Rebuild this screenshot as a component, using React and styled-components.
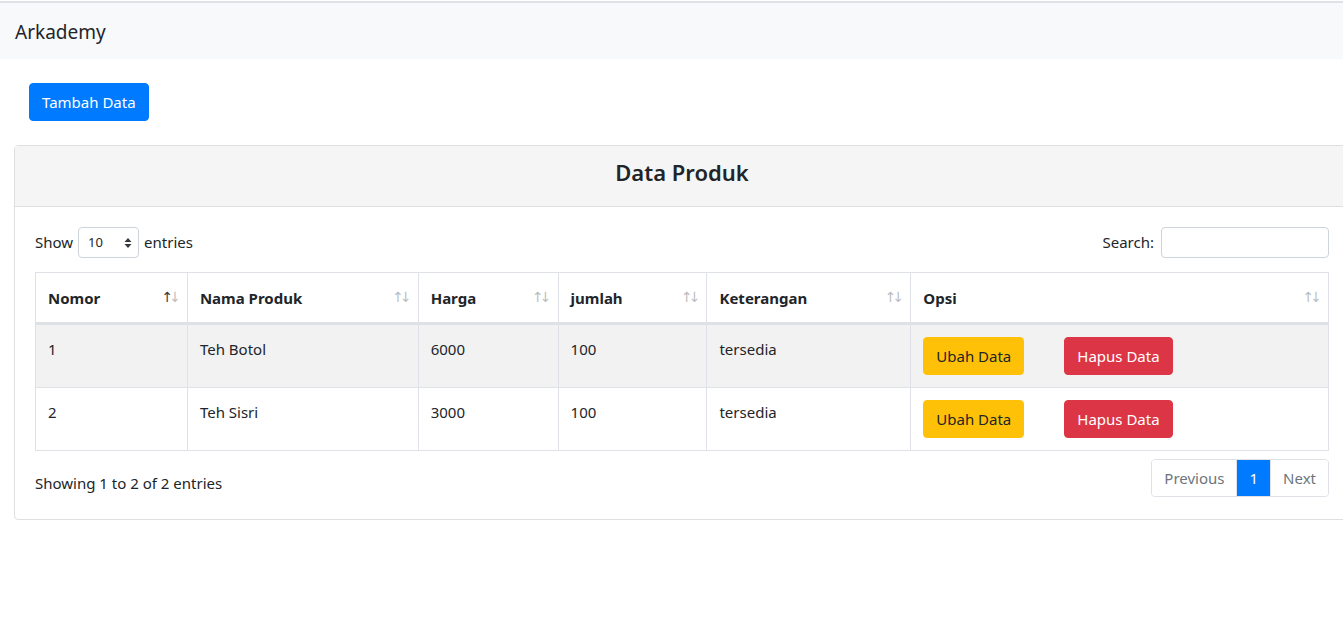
import React from "react";
import styled, { createGlobalStyle } from "styled-components";

const Global = createGlobalStyle`
  html, body { margin: 0; padding: 0; background: #fff; overflow: hidden; }
  body { font-family: "Noto Sans", "Open Sans", sans-serif; color: #212529; font-size: 16px; line-height: 1.5; }
  * { box-sizing: border-box; }
`;

const Page = styled.div`
  width: 1343px;
  padding-top: 1px;
`;

const Navbar = styled.nav`
  background: #f8f9fa;
  border-top: 2px solid #dee2e6;
  height: 58px;
  display: flex;
  align-items: center;
  padding: 2px 15px 0;
`;

const Brand = styled.span`
  font-size: 19px;
  color: #212529;
`;

const Main = styled.div`
  padding: 24px 0 0 14px;
  width: 1350px;
`;

const Btn = styled.button`
  font-family: inherit;
  font-size: 15px;
  line-height: 24px;
  padding: 6px 12px;
  border-radius: 4px;
  border: 1px solid ${(p) => p.$bg};
  background: ${(p) => p.$bg};
  color: ${(p) => p.$fg};
  cursor: pointer;
`;

const TopBtn = styled(Btn)`
  margin-left: 15px;
  margin-bottom: 24px;
`;

const Card = styled.div`
  border: 1px solid #dfdfdf;
  border-radius: 4px;
  width: 1336px;
`;

const CardHeader = styled.div`
  background: #f5f5f5;
  border-bottom: 1px solid #dfdfdf;
  height: 61px;
  display: flex;
  align-items: center;
  justify-content: center;
  padding-bottom: 8px;
`;

const Title = styled.h3`
  margin: 0;
  font-size: 22px;
  font-weight: 600;
`;

const CardBody = styled.div`
  padding: 20px 20px 22px;
`;

const Controls = styled.div`
  display: flex;
  justify-content: space-between;
  align-items: center;
  height: 31px;
  margin-bottom: 14px;
`;

const Label = styled.label`
  display: flex;
  align-items: center;
  gap: 5px;
  font-size: 15px;
`;

const SelectBox = styled.div`
  width: 61px;
  height: 31px;
  border: 1px solid #ced4da;
  border-radius: 4px;
  display: flex;
  align-items: center;
  justify-content: space-between;
  padding: 0 6px 0 9px;
  font-size: 13px;
`;

const Input = styled.input`
  width: 168px;
  height: 31px;
  border: 1px solid #ced4da;
  border-radius: 4px;
  margin-left: 2px;
`;

const Table = styled.table`
  width: 100%;
  border-collapse: collapse;
  border: 1px solid #dee2e6;
`;

const Th = styled.th`
  border: 1px solid #dee2e6;
  border-bottom: 3px solid #dee2e6;
  padding: 12px 12px 11px;
  text-align: left;
  font-size: 15px;
  font-weight: 700;
  width: ${(p) => p.$w}px;
`;

const ThInner = styled.div`
  display: flex;
  justify-content: space-between;
  align-items: center;
  line-height: 26px;
`;

const Arrows = styled.span`
  font-family: "DejaVu Sans", sans-serif;
  font-size: 14px;
  font-weight: 400;
  letter-spacing: -4px;
  margin-right: -2px;
  margin-top: -3px;
`;

const Arrow = styled.span`
  opacity: ${(p) => (p.$on ? 0.9 : 0.3)};
`;

const Tr = styled.tr`
  background: ${(p) => (p.$odd ? "#f2f2f2" : "#fff")};
`;

const Td = styled.td`
  border: 1px solid #dee2e6;
  padding: 12px;
  vertical-align: top;
  font-size: 15px;
  line-height: 24px;
`;

const Actions = styled.div`
  display: flex;
  gap: 40px;
`;

const Footer = styled.div`
  display: flex;
  justify-content: space-between;
  align-items: center;
  margin-top: 8px;
`;

const Info = styled.div`
  font-size: 15px;
  padding-top: 11px;
`;

const Pager = styled.div`
  display: flex;
  border: 1px solid #dee2e6;
  border-radius: 4px;
  overflow: hidden;
  height: 38px;
`;

const PageItem = styled.span`
  display: flex;
  align-items: center;
  padding: 0 12px;
  font-size: 15px;
  color: ${(p) => (p.$active ? "#fff" : "#6c757d")};
  background: ${(p) => (p.$active ? "#007bff" : "#fff")};
  border-left: ${(p) => (p.$first ? "none" : "1px solid #dee2e6")};
`;

const Sort = ({ up }) => (
  <Arrows>
    <Arrow $on={up}>↑</Arrow>
    <Arrow>↓</Arrow>
  </Arrows>
);

const cols = [
  ["Nomor", 152, true],
  ["Nama Produk", 231],
  ["Harga", 140],
  ["jumlah", 149],
  ["Keterangan", 204],
  ["Opsi", 418],
];

const rows = [
  ["1", "Teh Botol", "6000", "100", "tersedia"],
  ["2", "Teh Sisri", "3000", "100", "tersedia"],
];

export default function App() {
  return (
    <Page>
      <Global />
      <Navbar>
        <Brand>Arkademy</Brand>
      </Navbar>
      <Main>
        <TopBtn $bg="#007bff" $fg="#fff">Tambah Data</TopBtn>
        <Card>
          <CardHeader>
            <Title>Data Produk</Title>
          </CardHeader>
          <CardBody>
            <Controls>
              <Label>
                Show
                <SelectBox>
                  <span>10</span>
                  <svg width="8" height="12" viewBox="0 0 8 12">
                    <path d="M4 1 L7.5 5 H0.5 Z M4 11 L7.5 7 H0.5 Z" fill="#343a40" />
                  </svg>
                </SelectBox>
                entries
              </Label>
              <Label>
                Search:
                <Input type="search" />
              </Label>
            </Controls>
            <Table>
              <thead>
                <tr>
                  {cols.map(([name, w, up]) => (
                    <Th key={name} $w={w}>
                      <ThInner>
                        {name}
                        <Sort up={up} />
                      </ThInner>
                    </Th>
                  ))}
                </tr>
              </thead>
              <tbody>
                {rows.map((r, i) => (
                  <Tr key={i} $odd={i % 2 === 0}>
                    {r.map((c, j) => (
                      <Td key={j}>{c}</Td>
                    ))}
                    <Td>
                      <Actions>
                        <Btn $bg="#ffc107" $fg="#212529">Ubah Data</Btn>
                        <Btn $bg="#dc3545" $fg="#fff">Hapus Data</Btn>
                      </Actions>
                    </Td>
                  </Tr>
                ))}
              </tbody>
            </Table>
            <Footer>
              <Info>Showing 1 to 2 of 2 entries</Info>
              <Pager>
                <PageItem $first>Previous</PageItem>
                <PageItem $active>1</PageItem>
                <PageItem>Next</PageItem>
              </Pager>
            </Footer>
          </CardBody>
        </Card>
      </Main>
    </Page>
  );
}
